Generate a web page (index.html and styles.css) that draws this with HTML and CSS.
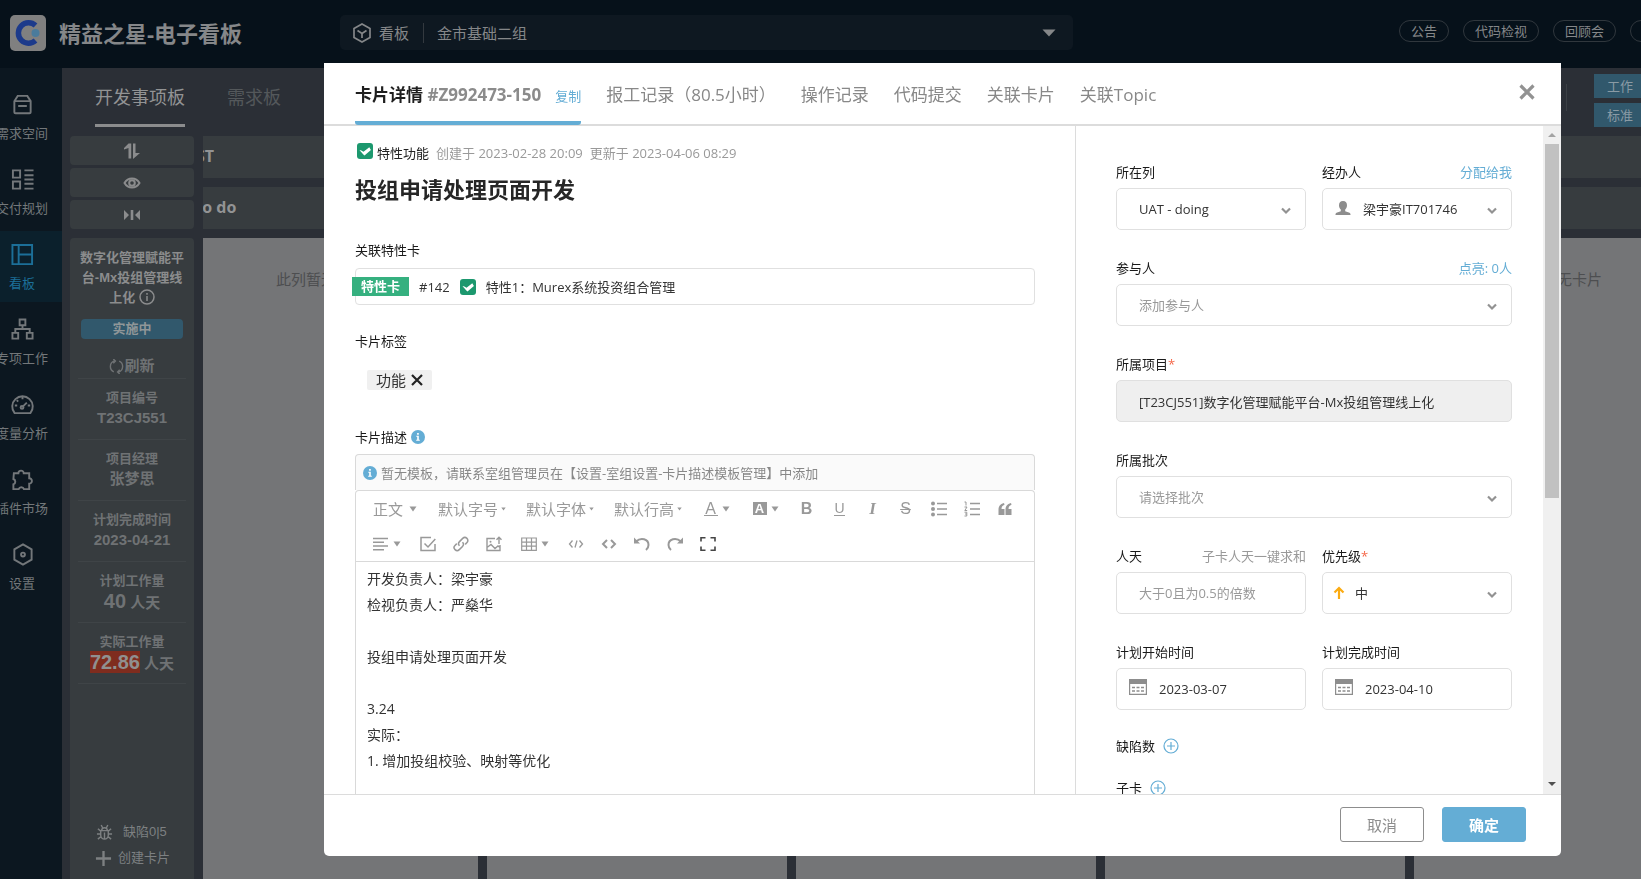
FILE: index.html
```html
<!DOCTYPE html>
<html lang="zh-CN">
<head>
<meta charset="utf-8">
<title>精益之星-电子看板</title>
<link rel="stylesheet" href="styles.css">
</head>
<body>
<svg class="defs" aria-hidden="true">
  <symbol id="i-chevron" viewBox="0 0 10 8"><path d="M1 1.5l4 4 4-4" fill="none" stroke="currentColor" stroke-width="2.2"/></symbol>
  <symbol id="i-caret" viewBox="0 0 8 6"><path d="M0.5 0.5h7L4 5.5z" fill="currentColor"/></symbol>
  <symbol id="i-check" viewBox="0 0 16 16"><rect width="16" height="16" rx="3" fill="#1c986e"/><path d="M2.500 7.200c2 0 2.800.6 4 1.600L12.300 4.200l1.600 2.800-6.400 5.600C6 11 4.600 9.500 2.500 7.200z" fill="#fff"/></symbol>
  <symbol id="i-info" viewBox="0 0 14 14"><circle cx="7" cy="7" r="7" fill="#64add5"/><path d="M5.300 5.800h2.500v4h1v1H5.200v-1h1v-3h-.9zM6.100 3h1.700v1.700H6.100z" fill="#fff"/></symbol>
  <symbol id="i-calendar" viewBox="0 0 18 16"><path d="M.6 1h16.800v14.300H.6z" fill="#fff" stroke="#8d8d8d" stroke-width="1.200"/><path d="M0 0h18v5H0z" fill="#8d8d8d"/><path d="M3 8.500h12M3 12h12" stroke="#8d8d8d" stroke-width="1.500" stroke-dasharray="3 1.500"/></symbol>
  <symbol id="i-plus" viewBox="0 0 16 16"><circle cx="8" cy="8" r="7" fill="none" stroke="#64add5" stroke-width="1.200"/><path d="M8 4v8M4 8h8" stroke="#64add5" stroke-width="1.200"/></symbol>
</svg>

<div class="app">
  <header class="topbar">
    <div class="brand">
      <svg class="logo" viewBox="0 0 36 36"><rect width="36" height="36" rx="5" fill="#808080"/><path d="M25.500 10.500A10.200 10.200 0 1 0 25.500 25.500" fill="none" stroke="#1c3a8b" stroke-width="5.500"/><circle cx="25.500" cy="18" r="4" fill="#4a7b9c"/></svg>
      <h1 class="brand-name">精益之星-电子看板</h1>
    </div>
    <div class="switcher">
      <svg class="cube" viewBox="0 0 20 20"><path d="M10 1l8 4.500v9L10 19l-8-4.500v-9z M5.500 7.500L10 10.500l4.500-3M10 10.500v4.500" fill="none" stroke="currentColor" stroke-width="1.700"/></svg>
      <label class="switcher-label" for="team">看板</label>
      <select id="team" class="switcher-select"><option>金市基础二组</option></select>
      <svg class="switcher-caret" viewBox="0 0 14 8"><path d="M0.500 0.500h13L7 7.500z" fill="currentColor"/></svg>
    </div>
    <nav class="pills">
      <a href="#" class="pill">公告</a>
      <a href="#" class="pill">代码检视</a>
      <a href="#" class="pill">回顾会</a>
      <a href="#" class="pill" aria-label="更多"></a>
    </nav>
  </header>

  <nav class="sidebar">
    <a href="#" class="side-item"><svg viewBox="0 0 24 24"><path d="M3.500 8.500L7 3h10l3.500 5.500V20a1.200 1.200 0 0 1-1.200 1.200H4.700A1.200 1.200 0 0 1 3.500 20zM3.500 8.500h17M7.500 13.500h9"/></svg><span>需求空间</span></a>
    <a href="#" class="side-item"><svg viewBox="0 0 24 24"><path d="M2 2.500h7.500V10H2zM2 14h7.500v7.500H2zM14 2.500h9.500M14 7.500h9.500M14 12h9.500M14 16.500h9.500M14 21.500h9.500"/></svg><span>交付规划</span></a>
    <a href="#" class="side-item active"><svg viewBox="0 0 24 24"><path d="M1.500 2h20.500v20H1.500zM8 2v20M8 12h14"/></svg><span>看板</span></a>
    <a href="#" class="side-item"><svg viewBox="0 0 24 24"><path d="M9 1.500h6v6H9zM1.500 15.500h6v6h-6zM16.500 15.500h6v6h-6zM12 7.500V11.500M4.500 15.500V11.500h15v4"/></svg><span>专项工作</span></a>
    <a href="#" class="side-item"><svg viewBox="0 0 24 24"><path d="M3.800 21A10.700 10.700 0 1 1 20.200 21zM12 14.500l4.500-4.500"/><path d="M12 4v2.500M4 13h2.500M17.500 13H20M6 7.500l1.500 1.500"/><circle cx="11.500" cy="15" r="1.500"/></svg><span>度量分析</span></a>
    <a href="#" class="side-item"><svg viewBox="0 0 24 24"><path d="M3 5.500h4.700a2.800 2.800 0 1 1 5.600 0H19v5.200a2.800 2.800 0 1 1 0 5.600V22h-5.500a2.900 2.900 0 0 0-5.500 0H2.500v-5a2.900 2.900 0 0 0 0-5.500z"/></svg><span>插件市场</span></a>
    <a href="#" class="side-item"><svg viewBox="0 0 24 24"><path d="M12.500 1.500l9 5.200v10.600l-9 5.200-9-5.200V6.700z"/><circle cx="12.500" cy="12" r="2"/></svg><span>设置</span></a>
  </nav>

  <main class="board">
    <div class="board-head">
      <nav class="board-tabs">
        <a href="#" class="board-tab active">开发事项板</a>
        <a href="#" class="board-tab">需求板</a>
      </nav>
      <div class="board-side">
        <span class="divider"></span>
        <div class="board-actions">
          <button type="button" class="board-btn">工作</button>
          <button type="button" class="board-btn">标准</button>
        </div>
      </div>
    </div>
    <div class="board-body">
      <aside class="project">
        <button type="button" class="tool" aria-label="排序"><svg viewBox="0 0 18 18"><path d="M5.500 1.500h2.700v15H5.500V6L1 7.500V6zM10 1.500h2.500v9.500H17L10 17z" fill="currentColor"/></svg></button>
        <button type="button" class="tool" aria-label="显示"><svg viewBox="0 0 18 18"><path d="M1.500 9C5 3 13 3 16.500 9 13 15 5 15 1.500 9z" fill="none" stroke="currentColor" stroke-width="2"/><circle cx="9" cy="9" r="2.800" fill="none" stroke="currentColor" stroke-width="2"/></svg></button>
        <button type="button" class="tool" aria-label="折叠"><svg viewBox="0 0 18 18"><path d="M1 4l5 5-5 5zM17 4l-5 5 5 5zM7.700 4h2.600v10H7.700z" fill="currentColor"/></svg></button>
        <section class="project-card">
          <h2 class="project-name">数字化管理赋能平台-Mx投组管理线上化 <svg class="project-info" viewBox="0 0 16 16"><circle cx="8" cy="8" r="7" fill="none" stroke="currentColor" stroke-width="1.500"/><path d="M8 7v5M8 4v1.700" stroke="currentColor" stroke-width="1.500"/></svg></h2>
          <span class="status">实施中</span>
          <button type="button" class="refresh"><svg viewBox="0 0 14 14"><path d="M5 1.800A5.500 5.500 0 0 0 4.500 12M9 12.200A5.500 5.500 0 0 0 9.500 2M4 0l2 1.800L4 4M10 10l-2 2.200L10 14" fill="none" stroke="currentColor" stroke-width="1.300"/></svg>刷新</button>
          <dl class="stats">
            <div><dt>项目编号</dt><dd>T23CJ551</dd></div>
            <div><dt>项目经理</dt><dd>张梦思</dd></div>
            <div><dt>计划完成时间</dt><dd>2023-04-21</dd></div>
            <div><dt>计划工作量</dt><dd><b>40</b> 人天</dd></div>
            <div><dt>实际工作量</dt><dd><b class="over">72.86</b> 人天</dd></div>
          </dl>
          <div class="project-foot">
            <a href="#"><svg viewBox="0 0 18 18"><path d="M5 7h8v5a4 4 0 0 1-8 0zM6 7a3 3 0 0 1 6 0M9 9v7M1 10.500h4M13 10.500h4M2 5l3 2.500M16 5l-3 2.500M2 16l3-2.500M16 16l-3-2.500M5.500 1l1.500 3M12.500 1L11 4" fill="none" stroke="currentColor" stroke-width="1.500"/></svg><span>缺陷0|5</span></a>
            <a href="#"><svg viewBox="0 0 18 18"><path d="M9 1v16M1 9h16" stroke="currentColor" stroke-width="2.500"/></svg><span>创建卡片</span></a>
          </div>
        </section>
      </aside>
      <div class="columns">
        <section class="column"><h3>ST</h3><h4>To do</h4><p>此列暂无卡片</p></section>
        <section class="column"><h3></h3><h4></h4><p></p></section>
        <section class="column"><h3></h3><h4></h4><p></p></section>
        <section class="column"><h3></h3><h4></h4><p></p></section>
        <section class="column"><h3></h3><h4></h4><p>此列暂无卡片</p></section>
      </div>
    </div>
  </main>
</div>

<div class="overlay">
  <div class="modal" role="dialog" aria-label="卡片详情">
    <header class="modal-head">
      <nav class="tabs">
        <div class="tab active"><a href="#" class="tab-main">卡片详情 <span>#Z992473-150</span></a><button type="button" class="link">复制</button></div>
        <a href="#" class="tab">报工记录（80.5小时）</a>
        <a href="#" class="tab">操作记录</a>
        <a href="#" class="tab">代码提交</a>
        <a href="#" class="tab">关联卡片</a>
        <a href="#" class="tab">关联Topic</a>
      </nav>
      <button type="button" class="close" aria-label="关闭"><svg viewBox="0 0 16 16"><path d="M1.500 1.500l13 13M14.500 1.500l-13 13" stroke="currentColor" stroke-width="3.200"/></svg></button>
    </header>

    <div class="modal-body">
      <section class="detail">
        <div class="meta"><svg class="check"><use href="#i-check"/></svg><span class="kind">特性功能</span><span>创建于 2023-02-28 20:09</span><span>更新于 2023-04-06 08:29</span></div>
        <h2 class="title">投组申请处理页面开发</h2>

        <h3 class="label">关联特性卡</h3>
        <div class="feature"><span class="ribbon">特性卡</span><span>#142</span><svg class="check"><use href="#i-check"/></svg><span>特性1：Murex系统投资组合管理</span></div>

        <h3 class="label label-tags">卡片标签</h3>
        <div class="chips"><span class="chip">功能<button type="button" aria-label="移除功能"><svg viewBox="0 0 12 12"><path d="M1 1l10 10M11 1L1 11" stroke="currentColor" stroke-width="2.200"/></svg></button></span></div>

        <h3 class="label label-desc">卡片描述<svg class="info"><use href="#i-info"/></svg></h3>
        <div class="note"><svg class="info"><use href="#i-info"/></svg>暂无模板，请联系室组管理员在【设置-室组设置-卡片描述模板管理】中添加</div>
        <div class="editor">
          <div class="toolbar">
            <div class="tb-select tb-short"><select aria-label="段落"><option>正文</option></select><svg class="caret"><use href="#i-caret"/></svg></div>
            <div class="tb-select"><select aria-label="字号"><option>默认字号</option></select><svg class="caret small"><use href="#i-caret"/></svg></div>
            <div class="tb-select"><select aria-label="字体"><option>默认字体</option></select><svg class="caret small"><use href="#i-caret"/></svg></div>
            <div class="tb-select"><select aria-label="行高"><option>默认行高</option></select><svg class="caret small"><use href="#i-caret"/></svg></div>
            <button type="button" class="tb tb-wide" aria-label="文字颜色"><span class="glyph glyph-color">A</span><svg class="caret"><use href="#i-caret"/></svg></button>
            <button type="button" class="tb tb-wide" aria-label="背景色"><span class="glyph glyph-fill">A</span><svg class="caret"><use href="#i-caret"/></svg></button>
            <button type="button" class="tb" aria-label="粗体"><span class="glyph glyph-bold">B</span></button>
            <button type="button" class="tb" aria-label="下划线"><span class="glyph glyph-under">U</span></button>
            <button type="button" class="tb" aria-label="斜体"><span class="glyph glyph-italic">I</span></button>
            <button type="button" class="tb" aria-label="删除线"><span class="glyph glyph-strike">S</span></button>
            <button type="button" class="tb" aria-label="无序列表"><svg viewBox="0 0 16 16"><path d="M6 2.500h10M6 8h10M6 13.500h10" stroke="currentColor" stroke-width="1.500"/><g fill="currentColor"><circle cx="2" cy="2.500" r="2"/><circle cx="2" cy="8" r="2"/><circle cx="2" cy="13.500" r="2"/></g></svg></button>
            <button type="button" class="tb" aria-label="有序列表"><svg viewBox="0 0 16 16"><path d="M6 2.500h10M6 8h10M6 13.500h10" stroke="currentColor" stroke-width="1.500"/><path d="M.5 1h1.500v3.500M.5 6h2.500L.8 9.500h2.400M.5 11.200h2.300v3.800H.5M1 13h1.800" fill="none" stroke="currentColor"/></svg></button>
            <button type="button" class="tb" aria-label="引用"><svg viewBox="0 0 16 16"><path d="M7 2C3 3 1.500 5.500 1.500 9v5H7.500V8H4.500c0-2 1-3.500 3-4.200zM14 2c-4 1-5.500 3.500-5.500 7v5h6V8h-3c0-2 1-3.500 3-4.200z" fill="currentColor"/></svg></button>
            <button type="button" class="tb tb-wide" aria-label="对齐"><svg viewBox="0 0 16 16"><path d="M0 2.500h15M0 6.200h11M0 10h15M0 13.700h11" stroke="currentColor" stroke-width="1.400"/></svg><svg class="caret"><use href="#i-caret"/></svg></button>
            <button type="button" class="tb" aria-label="待办"><svg viewBox="0 0 16 16"><path d="M11 1.500H1v13h14V8M4.500 7.500l3.500 3.500 7.300-8" fill="none" stroke="currentColor" stroke-width="1.500"/></svg></button>
            <button type="button" class="tb" aria-label="链接"><svg viewBox="0 0 16 16"><path d="M6.500 9.800a3 3 0 0 1 0-4.200l3.200-3.200a3 3 0 0 1 4.300 4.200l-1.800 1.800M9.500 6.200a3 3 0 0 1 0 4.200l-3.200 3.200A3 3 0 0 1 2 9.400l1.800-1.800" fill="none" stroke="currentColor" stroke-width="1.500"/></svg></button>
            <button type="button" class="tb" aria-label="图片"><svg viewBox="0 0 16 16"><path d="M9 2.500H1v12h13V9M1 11.500l4-3 4 4 3-2.500 2 1.500M13 8V1.500M10.500 3.800L13 1.200l2.500 2.600" fill="none" stroke="currentColor" stroke-width="1.400"/><circle cx="4.500" cy="5.800" r="1" fill="currentColor"/></svg></button>
            <button type="button" class="tb tb-wide" aria-label="表格"><svg viewBox="0 0 16 16"><path d="M.7 2h14.600v12.300H.7zM.7 6.200h14.600M.7 10.200h14.600M5.500 2v12.300M10.500 2v12.300" fill="none" stroke="currentColor" stroke-width="1.200"/></svg><svg class="caret"><use href="#i-caret"/></svg></button>
            <button type="button" class="tb" aria-label="行内代码"><svg viewBox="0 0 16 16"><path d="M4.500 4.500L1.500 8l3 3.500M11.500 4.500l3 3.500-3 3.500M9 4.500l-2 7" fill="none" stroke="currentColor" stroke-width="1.300"/></svg></button>
            <button type="button" class="tb" aria-label="代码块"><svg viewBox="0 0 16 16"><path d="M6 4L2 8l4 4M10 4l4 4-4 4" fill="none" stroke="currentColor" stroke-width="2"/></svg></button>
            <button type="button" class="tb" aria-label="撤销"><svg viewBox="0 0 16 16"><path d="M2 5.500C7 1 14.500 3 14.500 9c0 2-1 3.800-2.500 5" fill="none" stroke="currentColor" stroke-width="2"/><path d="M0 1.500V7.500h6z" fill="currentColor"/></svg></button>
            <button type="button" class="tb" aria-label="重做"><svg viewBox="0 0 16 16"><path d="M14 5.500C9 1 1.500 3 1.500 9c0 2 1 3.800 2.500 5" fill="none" stroke="currentColor" stroke-width="2"/><path d="M16 1.500V7.500h-6z" fill="currentColor"/></svg></button>
            <button type="button" class="tb tb-dark" aria-label="全屏"><svg viewBox="0 0 16 16"><path d="M1 5.500V1.700h4.500M10.500 1.700H15v3.800M15 10.500v3.800h-4.500M5.500 14.300H1v-3.800" fill="none" stroke="currentColor" stroke-width="1.600"/></svg></button>
          </div>
          <div class="content" contenteditable="true" spellcheck="false">
            <p>开发负责人：梁宇豪</p>
            <p>检视负责人：严燊华</p>
            <p><br></p>
            <p>投组申请处理页面开发</p>
            <p><br></p>
            <p>3.24</p>
            <p>实际：</p>
            <p>1. 增加投组校验、映射等优化</p>
          </div>
        </div>
      </section>

      <form class="side-form">
        <div class="form-row">
          <div class="field">
            <div class="field-head"><label for="col">所在列</label></div>
            <div class="control"><select id="col"><option>UAT - doing</option></select><svg class="chev"><use href="#i-chevron"/></svg></div>
          </div>
          <div class="field">
            <div class="field-head"><label for="owner">经办人</label><button type="button" class="link">分配给我</button></div>
            <div class="control has-user"><svg class="lead" viewBox="0 0 16 16"><path d="M8 1c2.800 0 4 1.800 4 4.200 0 2-.8 3.500-1.800 4.300v1.700l4.300 1.500c.9.400 1 1.300 1 2.300H.5c0-1 .1-1.900 1-2.300l4.300-1.500V9.500C4.800 8.700 4 7.200 4 5.200 4 2.800 5.200 1 8 1z" fill="#8d8d8d"/></svg><select id="owner"><option>梁宇豪IT701746</option></select><svg class="chev"><use href="#i-chevron"/></svg></div>
          </div>
        </div>
        <div class="field">
          <div class="field-head"><label for="members">参与人</label><button type="button" class="link">点亮: 0人</button></div>
          <div class="control"><select id="members" class="empty"><option>添加参与人</option></select><svg class="chev"><use href="#i-chevron"/></svg></div>
        </div>
        <div class="field">
          <div class="field-head"><label for="proj">所属项目<i>*</i></label></div>
          <div class="control"><input id="proj" type="text" class="locked" readonly value="[T23CJ551]数字化管理赋能平台-Mx投组管理线上化"></div>
        </div>
        <div class="field">
          <div class="field-head"><label for="batch">所属批次</label></div>
          <div class="control"><select id="batch" class="empty"><option>请选择批次</option></select><svg class="chev"><use href="#i-chevron"/></svg></div>
        </div>
        <div class="form-row">
          <div class="field">
            <div class="field-head"><label for="days">人天</label><button type="button" class="link muted">子卡人天一键求和</button></div>
            <div class="control"><input id="days" type="text" placeholder="大于0且为0.5的倍数"></div>
          </div>
          <div class="field">
            <div class="field-head"><label for="prio">优先级<i>*</i></label></div>
            <div class="control has-arrow"><svg class="lead" viewBox="0 0 12 14"><path d="M6 13V2.500M1.500 6.500L6 2l4.500 4.500" fill="none" stroke="#fbab12" stroke-width="2.200"/></svg><select id="prio"><option>中</option></select><svg class="chev"><use href="#i-chevron"/></svg></div>
          </div>
        </div>
        <div class="form-row">
          <div class="field">
            <div class="field-head"><label for="start">计划开始时间</label></div>
            <div class="control has-date"><svg class="lead"><use href="#i-calendar"/></svg><input id="start" type="text" value="2023-03-07"></div>
          </div>
          <div class="field">
            <div class="field-head"><label for="end">计划完成时间</label></div>
            <div class="control has-date"><svg class="lead"><use href="#i-calendar"/></svg><input id="end" type="text" value="2023-04-10"></div>
          </div>
        </div>
        <div class="adders">
          <div class="adder">缺陷数<button type="button" aria-label="添加缺陷"><svg><use href="#i-plus"/></svg></button></div>
          <div class="adder">子卡<button type="button" aria-label="添加子卡"><svg><use href="#i-plus"/></svg></button></div>
        </div>
      </form>

      <div class="scrollbar" aria-hidden="true">
        <svg viewBox="0 0 18 18"><path d="M5 11h8L9 7z" fill="#a3a3a3"/></svg>
        <div class="track"><div class="thumb"></div></div>
        <svg viewBox="0 0 18 18"><path d="M5 6h8L9 10z" fill="#505050"/></svg>
      </div>
    </div>

    <footer class="modal-foot">
      <button type="button" class="btn">取消</button>
      <button type="button" class="btn btn-primary">确定</button>
    </footer>
  </div>
</div>
</body>
</html>
```
FILE: styles.css
```css
* { box-sizing: border-box; }
html, body { height: 100%; }
body {
  margin: 0;
  overflow: hidden;
  font: 13px/20px "Open Sans", "Noto Sans CJK SC", sans-serif;
  color: #333;
  background: #2b2f36;
}
h1, h2, h3, h4, p, dl, dd { margin: 0; font-size: inherit; font-weight: inherit; }
a { color: inherit; text-decoration: none; }
button, input, select { font: inherit; color: inherit; margin: 0; padding: 0; border: 0; background: none; border-radius: 0; }
select { appearance: none; outline: 0; }
svg { display: block; flex: none; }
.defs { display: none; }

/* Application frame */
.app {
  height: 100vh;
  display: grid;
  grid-template: 68px minmax(0, 1fr) / 62px minmax(0, 1fr);
}
.topbar {
  grid-column: 1 / -1;
  display: flex;
  align-items: flex-start;
  padding: 15px 0 0 10px;
  overflow: hidden;
  background: #06111a;
  color: #858789;
}
.brand { display: flex; align-items: center; gap: 13px; width: 330px; flex: none; }
.logo { width: 36px; height: 36px; }
.brand-name { font-size: 22px; font-weight: 700; line-height: 32px; }
.switcher {
  flex: 0 1 733px;
  height: 35px;
  display: flex;
  align-items: center;
  padding: 0 17px 0 12px;
  border-radius: 5px;
  background: #0e1821;
  font-size: 15px;
}
.cube { width: 20px; height: 20px; margin-right: 7px; }
.switcher-label { padding-right: 14px; border-right: 1px solid #33393f; }
.switcher-select { flex: 1; padding-left: 13px; font-size: 15px; }
.switcher-caret { width: 14px; height: 8px; }
.pills { margin-left: auto; display: flex; gap: 14px; padding-top: 5px; margin-right: -39px; }
.pill {
  height: 22px;
  min-width: 50px;
  padding: 0 11px;
  border: 1px solid #30373d;
  border-radius: 11px;
  text-align: center;
  white-space: nowrap;
}

.sidebar { background: #0c1720; padding-top: 13px; display: flex; flex-direction: column; gap: 4px; overflow: hidden; }
.side-item {
  height: 71px;
  display: flex;
  flex-direction: column;
  align-items: center;
  padding: 12px 18px 0 0;
  gap: 7px;
  color: #73777a;
  white-space: nowrap;
}
.side-item svg { width: 23px; height: 23px; fill: none; stroke: currentColor; stroke-width: 2; }
.side-item.active { color: #1c6f98; background: #0b202c; }

/* Board */
.board { display: flex; flex-direction: column; overflow: hidden; background: #2b2f36; }
.board-head { height: 68px; display: flex; justify-content: space-between; padding-left: 33px; }
.board-tabs { display: flex; gap: 42px; font-size: 18px; color: #54585b; }
.board-tab { padding-top: 19px; height: 59px; }
.board-tab.active { color: #929394; border-bottom: 3px solid #8b8c8d; }
.board-side { display: flex; gap: 27px; padding-top: 6px; }
.divider { width: 1px; height: 27px; margin-top: 10px; background: #3b4045; }
.board-actions { width: 47px; display: flex; flex-direction: column; gap: 5px; }
.board-btn { height: 24px; background: #31586c; color: #8a9ba5; text-align: left; padding-left: 13px; }
.board-body { flex: 1; display: flex; gap: 9px; padding-left: 8px; min-height: 0; }
.project { width: 124px; flex: none; display: flex; flex-direction: column; gap: 3px; color: #8b8c8d; }
.tool {
  height: 29px;
  border-radius: 4px;
  background: #373c3f;
  display: flex;
  align-items: center;
  justify-content: center;
}
.tool svg { width: 18px; height: 18px; }
.project-card {
  flex: 1;
  margin-top: 6px;
  padding: 10px 8px;
  display: flex;
  flex-direction: column;
  border-radius: 4px 4px 0 0;
  background: #373c3f;
  text-align: center;
  font-family: "Liberation Sans", "Noto Sans CJK SC", sans-serif;
  font-weight: 700;
}
.project-info { display: inline-block; width: 16px; height: 16px; vertical-align: -3px; }
.status { margin: 11px 3px 0; border-radius: 4px; background: #31586c; color: #8f9698; }
.refresh {
  height: 40px;
  padding-top: 15px;
  display: flex;
  align-items: center;
  justify-content: center;
  border-bottom: 1px solid #3f4447;
  font-size: 15px;
  font-weight: 700;
  color: #6f7274;
}
.refresh svg { width: 15px; height: 15px; }
.stats { color: #6f7274; }
.stats div { height: 61px; padding-top: 9px; border-bottom: 1px solid #3f4447; }
.stats dd { font-size: 15px; }
.stats b { font-size: 20px; }
.stats .over { background: #7f2c1e; color: #909090; }
.project-foot { margin-top: auto; font-weight: 400; color: #7d8082; display: flex; flex-direction: column; gap: 6px; padding: 0 10px 1px 17px; }
.project-foot a { display: flex; gap: 6px; align-items: center; }
.project-foot a:first-child { gap: 10px; padding-left: 1px; }
.project-foot svg { width: 17px; height: 17px; }

.columns { flex: 1; min-width: 0; display: flex; gap: 9px; overflow: hidden; color: #929394; }
.column { flex: 0 0 300px; display: grid; grid-template-rows: 42px 42px 1fr; gap: 9px; }
.column:first-child { margin-left: -25px; }
.column h3, .column h4 { background: #373c3f; font-weight: 700; font-size: 16px; line-height: 40px; padding-left: 18px; }
.column h4 { padding-left: 15px; }
.column p { background: #747577; color: #4d4e50; padding: 31px 14px 0 0; text-align: center; font-size: 15px; }

/* Dialog */
.overlay { position: fixed; inset: 0; display: flex; padding: 63px 80px 23px 324px; }
.modal { flex: 1; min-width: 0; display: flex; flex-direction: column; overflow: hidden; background: #fff; border-radius: 0 0 5px 5px; }
.modal-head { height: 63px; flex: none; display: flex; align-items: flex-start; justify-content: space-between; padding: 0 26px 0 31px; border-bottom: 2px solid #dcdcdc; }
.tabs { display: flex; gap: 25px; font-size: 17px; line-height: 24px; color: #888; white-space: nowrap; }
.tab { padding-top: 20px; height: 62px; }
.tab.active { display: flex; align-items: baseline; gap: 14px; border-bottom: 4px solid #64add5; border-radius: 3px; }
.tab-main { color: #1f1f1f; font-weight: 700; }
.tab-main span { color: #8b8b8b; }
.link { color: #64add5; font-size: 13px; }
.link.muted { color: #999; }
.close { width: 16px; height: 16px; margin-top: 21px; color: #929292; }

.modal-body { flex: 1; min-height: 0; display: flex; overflow: hidden; }
.detail { flex: 1; min-width: 0; padding: 17px 40px 0 31px; border-right: 1px solid #dcdcdc; display: flex; flex-direction: column; }
.meta { display: flex; gap: 7px; color: #999; padding-left: 2px; }
.meta .check { margin-right: -3px; }
.check { width: 16px; height: 16px; }
.kind { color: #222; }
.title { margin-top: 12px; font-size: 22px; line-height: 28px; font-weight: 700; color: #262626; }
.label { margin-top: 37px; color: #1a1a1a; display: flex; align-items: center; gap: 4px; }
.label-tags { margin-top: 26px; }
.info { width: 14px; height: 14px; }
.feature { height: 37px; margin-top: 8px; display: flex; align-items: center; border: 1px solid #e0e0e0; border-radius: 4px; gap: 10px; }
.ribbon { margin-left: -4px; padding: 0 9px; line-height: 19px; background: #35b07f; color: #fff; font-weight: 700; }
.chips { margin-top: 19px; padding-left: 12px; display: flex; }
.chip { display: flex; align-items: center; gap: 5px; padding: 0 9px; font-size: 15px; background: #f0f0f0; border-radius: 2px; }
.chip svg { width: 12px; height: 12px; color: #222; }
.note { height: 36px; flex: none; margin-top: 7px; display: flex; align-items: center; gap: 4px; padding-left: 7px; border: 1px solid #d9d9d9; border-bottom: 0; border-radius: 4px 4px 0 0; background: #fafafa; color: #888; white-space: nowrap; }
.editor { flex: 1; border: 1px solid #d9d9d9; border-bottom: 0; border-radius: 4px 4px 0 0; }
.toolbar { display: flex; flex-wrap: wrap; padding-left: 6px; border-bottom: 1px solid #d9d9d9; color: #999; }
.tb, .tb-select { height: 35px; width: 33px; display: flex; align-items: center; justify-content: center; }
.tb svg { width: 16px; height: 16px; }
.tb-wide { width: 49px; gap: 4px; }
.tb-select { width: 88px; font-size: 15px; gap: 2px; }
.tb-short { width: 66px; gap: 5px; }
.toolbar .caret { width: 8px; height: 6px; }
.toolbar .caret.small { width: 5px; height: 4px; }
.tb-dark { color: #444; }
.glyph { font: 16px/16px "Liberation Sans", sans-serif; }
.glyph-color { width: 14px; line-height: 13px; border-bottom: 1px solid currentColor; }
.glyph-fill { width: 14px; font-size: 13px; line-height: 13px; font-weight: 700; background: #999; color: #fff; }
.glyph-bold { font-weight: 700; }
.glyph-under { line-height: 14px; font-size: 14px; border-bottom: 1px solid currentColor; }
.glyph-italic { font: italic 700 17px/16px "Liberation Serif", serif; }
.glyph-strike { text-decoration: line-through; }
.content { padding: 4px 11px; font-size: 14px; line-height: 26px; outline: 0; }

.side-form { flex: 0 0 467px; padding: 36px 31px 0 40px; display: flex; flex-direction: column; gap: 28px; }
.form-row { display: flex; gap: 16px; }
.field { flex: 1; min-width: 0; display: flex; flex-direction: column; gap: 6px; }
.field-head { display: flex; justify-content: space-between; color: #1a1a1a; }
.field-head i { color: #f5684a; font-style: normal; }
.control { display: grid; align-items: center; }
.control > * { grid-area: 1 / 1; }
.control input, .control select { width: 100%; height: 42px; padding: 0 22px; border: 1px solid #e0e0e0; border-radius: 5px; outline: 0; background: #fff; color: #333; }
.control .empty, .control input::placeholder { color: #999; }
.control .locked { background: #efefef; }
.control svg { z-index: 1; pointer-events: none; }
.chev { width: 10px; height: 8px; justify-self: end; margin: 4px 15px 0 0; color: #929292; }
.lead { width: 16px; height: 16px; margin-left: 13px; }
.control.has-user select { padding-left: 40px; }
.has-user .lead { margin-bottom: 2px; }
.control.has-arrow select { padding-left: 32px; }
.has-arrow .lead { width: 12px; height: 14px; margin-left: 11px; }
.control.has-date input { padding-left: 42px; }
.has-date .lead { width: 18px; margin-bottom: 4px; }
.adders { display: flex; flex-direction: column; gap: 22px; margin-top: -2px; }
.adder { display: flex; align-items: center; gap: 8px; color: #1a1a1a; }
.adder svg { width: 16px; height: 16px; }

.scrollbar { width: 18px; flex: none; display: flex; flex-direction: column; background: #f0f0f0; }
.scrollbar svg { width: 18px; height: 18px; }
.track { flex: 1; padding: 0 2px; }
.thumb { height: 56%; background: #c1c1c1; }

.modal-foot { height: 62px; flex: none; display: flex; justify-content: flex-end; gap: 18px; padding: 12px 35px 0 0; border-top: 1px solid #dcdcdc; }
.btn { width: 84px; height: 35px; border: 1px solid #8d8d8d; border-radius: 3px; color: #8d8d8d; font-size: 15px; }
.btn-primary { border-color: #64add5; background: #64add5; color: #fff; font-weight: 700; }
```
